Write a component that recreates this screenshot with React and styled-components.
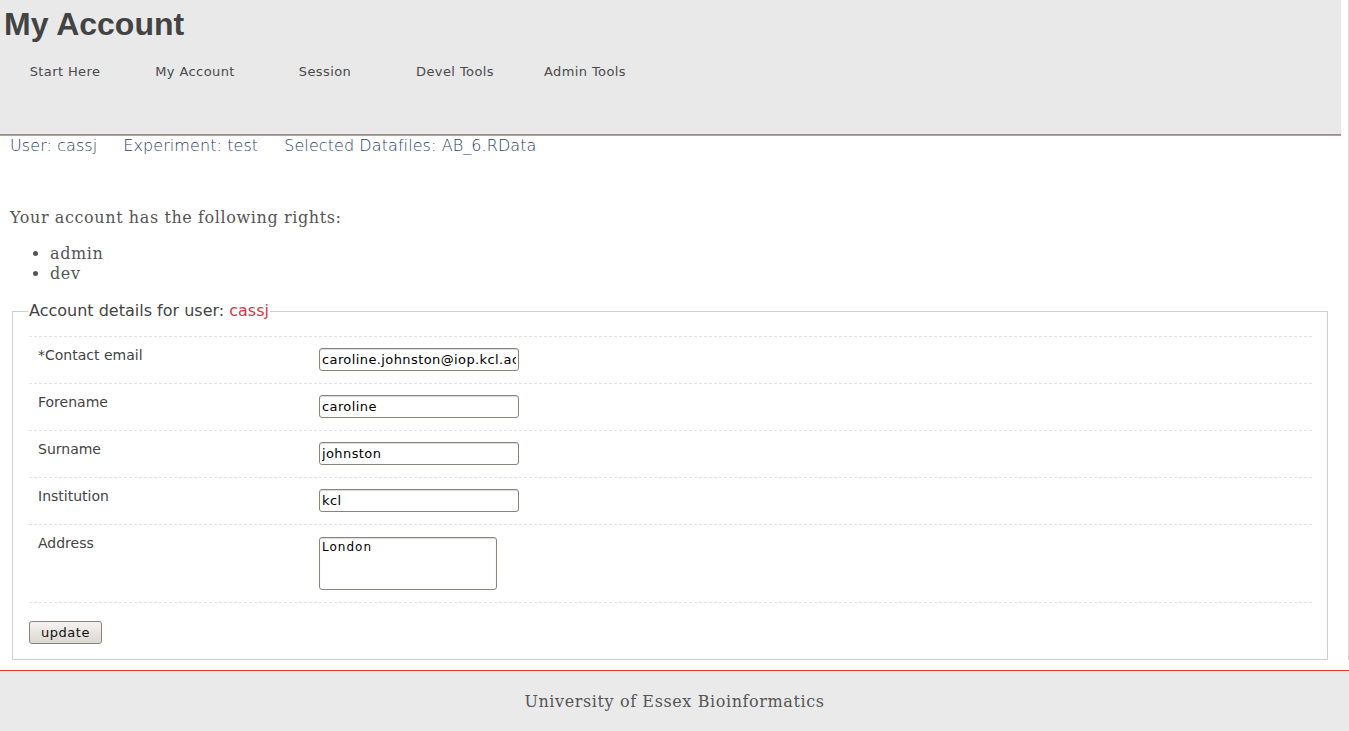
import React from 'react';
import styled, { createGlobalStyle } from 'styled-components';

const GlobalStyle = createGlobalStyle`
    html, body {
        margin: 0;
        padding: 0;
        background: #fff;
    }
    body {
        font-family: "DejaVu Sans", "Liberation Sans", sans-serif;
        color: #444;
    }
`;

const navItems = ['Start Here', 'My Account', 'Session', 'Devel Tools', 'Admin Tools'];

const fields = [
    { label: '*Contact email', value: 'caroline.johnston@iop.kcl.ac.uk' },
    { label: 'Forename', value: 'caroline' },
    { label: 'Surname', value: 'johnston' },
    { label: 'Institution', value: 'kcl' },
];

function App() {
    return (
        <Page>
            <GlobalStyle />
            <Main>
                <Header>
                    <Title>My Account</Title>
                    <Nav>
                        {navItems.map(item => (
                            <NavItem key={item} href="#">{item}</NavItem>
                        ))}
                    </Nav>
                </Header>
                <Content>
                    <InfoBar>
                        <span>User: cassj</span>
                        <span>Experiment: test</span>
                        <span>Selected Datafiles: AB_6.RData</span>
                    </InfoBar>
                    <Intro>Your account has the following rights:</Intro>
                    <Rights>
                        <li>admin</li>
                        <li>dev</li>
                    </Rights>
                    <Details>
                        <Legend>Account details for user: <UserName>cassj</UserName></Legend>
                        {fields.map(f => (
                            <Row key={f.label}>
                                <Label>{f.label}</Label>
                                <TextInput defaultValue={f.value} />
                            </Row>
                        ))}
                        <Row>
                            <Label>Address</Label>
                            <TextArea defaultValue="London" />
                        </Row>
                        <Actions>
                            <Button type="button">update</Button>
                        </Actions>
                    </Details>
                </Content>
            </Main>
            <Footer>University of Essex Bioinformatics</Footer>
        </Page>
    );
}

export default App;

const Page = styled.div`
    min-height: 100vh;
    display: flex;
    flex-direction: column;
`;

const Main = styled.div`
    width: 1348px;
    border-right: 1px solid #dcdcdc;
    flex: 1;
`;

const Header = styled.header`
    width: 1341px;
    height: 134px;
    background: #e9e9e9;
    border-bottom: 1px solid #8f8f8f;
    box-shadow: 0 1px 0 #c49a9a;
    box-sizing: content-box;
`;

const Title = styled.h1`
    margin: 0;
    padding: 6px 0 0 4px;
    font-family: "Liberation Sans", Arial, sans-serif;
    font-weight: bold;
    font-size: 32px;
    line-height: 36px;
    color: #434343;
`;

const Nav = styled.nav`
    display: flex;
    margin-top: 20px;
`;

const NavItem = styled.a`
    width: 130px;
    text-align: center;
    font-size: 13px;
    line-height: 20px;
    letter-spacing: 0.4px;
    color: #4a4a4a;
    text-decoration: none;
`;

const Content = styled.main`
    padding: 0 11px 0 10px;
    width: 1341px;
    box-sizing: border-box;
`;

const InfoBar = styled.div`
    display: flex;
    gap: 26px;
    padding-top: 1px;
    font-size: 16px;
    line-height: 20px;
    letter-spacing: 0.08px;
    font-weight: 200;
    color: #2c3e5e;
`;

const serifText = `
    font-family: "DejaVu Serif", "Liberation Serif", serif;
    font-weight: 200;
    font-size: 16px;
    line-height: 20px;
    letter-spacing: 0.6px;
    color: #555;
`;

const Intro = styled.p`
    ${serifText}
    margin: 52px 0 0;
`;

const Rights = styled.ul`
    ${serifText}
    margin: 16px 0 0;
    padding-left: 40px;
`;

const Details = styled.fieldset`
    margin: 17px 2px 0;
    padding: 0 15px 15px 16px;
    border: 1px solid #cfcfcf;
`;

const Legend = styled.legend`
    margin-left: -1px;
    padding: 0 1px;
    font-size: 16px;
    line-height: 20px;
    color: #444;
`;

const UserName = styled.span`
    color: #d3393f;
`;

const Row = styled.div`
    display: grid;
    grid-template-columns: 290px 1fr;
    align-items: start;
    padding: 9px 0 12px;
    border-top: 1px dashed #e2e2e2;
    &:first-of-type {
        margin-top: 15px;
    }
`;

const Label = styled.label`
    padding-left: 9px;
    font-size: 14px;
    line-height: 18px;
    color: #444;
`;

const fieldBase = `
    box-sizing: border-box;
    margin-top: 2px;
    border: 1px solid #8d837b;
    border-radius: 3px;
    box-shadow: inset 0 1px 1px rgba(0, 0, 0, 0.15);
    background: #fff;
    color: #000;
    font-family: "DejaVu Sans", sans-serif;
    font-size: 13px;
    letter-spacing: 0.4px;
    padding: 1px 2px;
    outline: none;
`;

const TextInput = styled.input`
    ${fieldBase}
    width: 200px;
    height: 23px;
`;

const TextArea = styled.textarea`
    ${fieldBase}
    margin-top: 3px;
    width: 178px;
    height: 53px;
    padding-top: 2px;
    resize: none;
    font-size: 12px;
    letter-spacing: 1px;
    line-height: 15px;
`;

const Actions = styled.div`
    border-top: 1px dashed #e2e2e2;
    padding-top: 18px;
`;

const Button = styled.button`
    width: 73px;
    height: 23px;
    padding: 0;
    border: 1px solid #8a847e;
    border-radius: 3px;
    background: linear-gradient(#f5f3f0, #dcd8d2);
    font-family: "DejaVu Sans", sans-serif;
    font-size: 13px;
    letter-spacing: 0.5px;
    color: #111;
`;

const Footer = styled.footer`
    margin-top: 10px;
    height: 60px;
    border-top: 1px solid #dd3b34;
    background: #eaeaea;
    display: flex;
    align-items: center;
    justify-content: center;
    font-family: "DejaVu Serif", "Liberation Serif", serif;
    font-weight: 200;
    font-size: 16px;
    letter-spacing: 0.6px;
    color: #555;
`;
